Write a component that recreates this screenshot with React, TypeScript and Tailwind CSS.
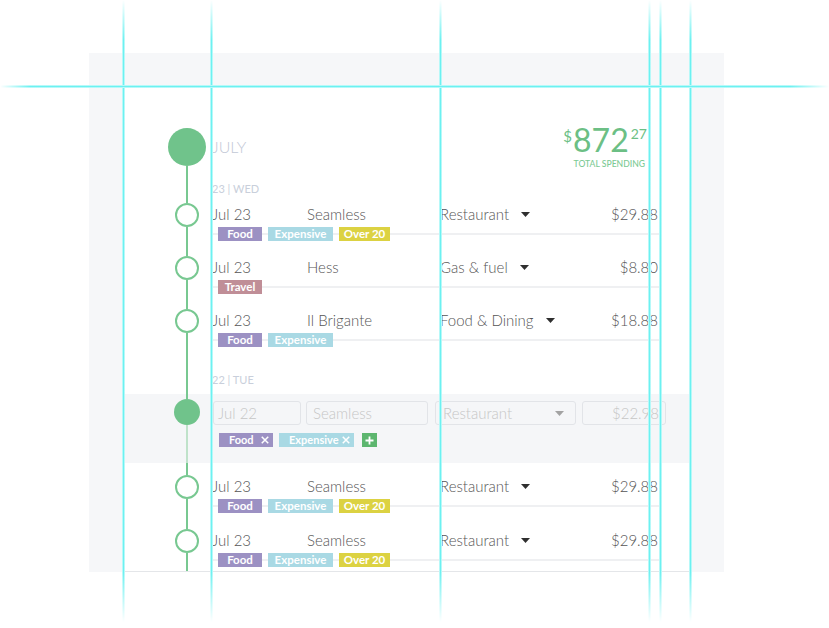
import React from 'react';

type Entry = {
  date: string;
  name: string;
  category: string;
  amount: string;
  tags: string[];
};

const tagStyles: Record<string, string> = {
  Food: 'w-[44px] bg-[#9c91c3]',
  Expensive: 'w-[65px] bg-[#a9d9e4]',
  'Over 20': 'w-[51px] bg-[#dcd242]',
  Travel: 'w-[44px] bg-[#c08e97]',
};

const wednesday: Entry[] = [
  { date: 'Jul 23', name: 'Seamless', category: 'Restaurant', amount: '$29.88', tags: ['Food', 'Expensive', 'Over 20'] },
  { date: 'Jul 23', name: 'Hess', category: 'Gas & fuel', amount: '$8.80', tags: ['Travel'] },
  { date: 'Jul 23', name: 'Il Brigante', category: 'Food & Dining', amount: '$18.88', tags: ['Food', 'Expensive'] },
];

const tuesday: Entry[] = [
  { date: 'Jul 23', name: 'Seamless', category: 'Restaurant', amount: '$29.88', tags: ['Food', 'Expensive', 'Over 20'] },
  { date: 'Jul 23', name: 'Seamless', category: 'Restaurant', amount: '$29.88', tags: ['Food', 'Expensive', 'Over 20'] },
];

function Line({ className = '' }: { className?: string }) {
  return <div className={`w-[2px] bg-[#78c891] ${className}`} />;
}

function Caret({ className = '' }: { className?: string }) {
  return (
    <svg width="9" height="5" viewBox="0 0 9 5" className={className}>
      <path d="M0 0h9L4.5 5z" fill="currentColor" />
    </svg>
  );
}

function Tag({ label }: { label: string }) {
  return (
    <span
      className={`${tagStyles[label]} h-[14px] text-center text-[11.5px] font-bold leading-[14px] text-white`}
    >
      {label}
    </span>
  );
}

function DayLabel({ text, className = '' }: { text: string; className?: string }) {
  return (
    <div className={`flex ${className}`}>
      <div className="w-[89px] shrink-0 pl-[63px]">
        <Line className="h-full" />
      </div>
      <div className="flex items-center text-[11px] text-[#c9cfdb]">{text}</div>
    </div>
  );
}

function Row({ entry, tall }: { entry: Entry; tall?: boolean }) {
  return (
    <div className={`flex ${tall ? 'h-[54px]' : 'h-[53px]'}`}>
      <div className="w-[89px] shrink-0 pl-[52px]">
        <div className="flex h-full w-[24px] flex-col items-center">
          <Line className="h-px" />
          <div className="h-[24px] w-[24px] shrink-0 rounded-full border-2 border-[#78c891] bg-white" />
          <Line className="flex-1" />
        </div>
      </div>
      <div className="flex-1 pr-[30px]">
        <div className="flex h-[25px] items-center text-[15px] font-light text-[#555]">
          <span className="w-[95px]">{entry.date}</span>
          <span className="w-[133px]">{entry.name}</span>
          <span className="flex flex-1 items-center gap-[12px]">
            {entry.category}
            <Caret className="text-[#2f2f2f]" />
          </span>
          <span className="pr-[2px]">{entry.amount}</span>
        </div>
        <div className="flex h-[14px] gap-[6px] bg-[linear-gradient(#eff0f2,#eff0f2)] bg-[length:100%_2px] bg-center bg-no-repeat pl-[6px]">
          {entry.tags.map((t) => (
            <Tag key={t} label={t} />
          ))}
        </div>
      </div>
    </div>
  );
}

function Cross() {
  return (
    <svg width="8" height="8" viewBox="0 0 8 8" className="shrink-0">
      <path d="M0.75 0.75l6.5 6.5M7.25 0.75l-6.5 6.5" stroke="white" strokeWidth="1.5" />
    </svg>
  );
}

function EditRow() {
  const field = 'h-[24px] rounded-[3px] border border-[#e2e4e8] leading-[22px]';
  return (
    <div className="flex h-[69px] bg-[#f5f6f8]">
      <div className="w-[89px] shrink-0 pl-[52px]">
        <div className="flex h-full w-[24px] flex-col items-center">
          <Line className="h-[5px]" />
          <div className="h-[26px] w-[26px] shrink-0 rounded-full bg-[#70c38b]" />
          <div className="w-[2px] flex-1 bg-[#bfe2ca]" />
        </div>
      </div>
      <div className="flex-1 pt-[7px]">
        <div className="flex text-[15px] font-light text-[#c6c6c6]">
          <div className={`${field} ml-px w-[88px] pl-[4px]`}>Jul 22</div>
          <div className={`${field} ml-[5px] w-[122px] pl-[6px]`}>Seamless</div>
          <div className={`${field} ml-[7px] flex w-[141px] items-center justify-between pl-[7px] pr-[11px]`}>
            Restaurant
            <Caret className="text-[#a3a3a3]" />
          </div>
          <div className={`${field} ml-[6px] w-[84px] pr-[6px] text-right`}>$22.98</div>
        </div>
        <div className="mt-[8px] flex h-[14px] items-center pl-[7px] text-[11px] font-bold text-white">
          <span className="flex h-[14px] w-[54px] items-center justify-between bg-[#9c91c3] pl-[10px] pr-[4px]">
            Food
            <Cross />
          </span>
          <span className="ml-[6px] flex h-[14px] w-[75px] items-center justify-between bg-[#a9d9e4] pl-[10px] pr-[4px]">
            Expensive
            <Cross />
          </span>
          <span className="ml-[8px] flex h-[14px] w-[15px] items-center justify-center bg-[#5db66f]">
            <svg width="9" height="9" viewBox="0 0 9 9">
              <path d="M4.5 0.5v8M0.5 4.5h8" stroke="white" strokeWidth="1.8" />
            </svg>
          </span>
        </div>
      </div>
    </div>
  );
}

export default function App() {
  const vGuide =
    'absolute top-0 h-[628px] w-[3px] bg-[linear-gradient(to_right,#dcfcfc,#6cf1f1,#dcfcfc)] [mask-image:linear-gradient(to_bottom,transparent,#000_40px,#000_572px,transparent_622px)]';

  return (
    <div className="relative h-[628px] w-[829px] overflow-hidden bg-white font-['Lato',sans-serif]">
      <div className="ml-[89px] mt-[53px] h-[519px] w-[635px] bg-[#f6f7f9] px-[34px] pt-[34px]">
        <div className="h-[485px] overflow-hidden border-b border-[#e4e6e9] bg-white">
          {/* month header */}
          <div className="flex h-[89px]">
            <div className="flex w-[89px] shrink-0 flex-col pl-[45px] pt-[41px]">
              <div className="flex h-full w-[38px] flex-col items-center">
                <div className="h-[38px] w-[38px] shrink-0 rounded-full bg-[#70c38b]" />
                <Line className="flex-1" />
              </div>
            </div>
            <div className="pt-[41px]">
              <div className="flex h-[38px] items-center text-[16px] font-light text-[#c2c8d6]">JULY</div>
            </div>
            <div className="ml-auto flex flex-col items-end pr-[43px] pt-[37px] text-[#6cbf85]">
              <div className="flex h-[32px] items-start leading-none">
                <span className="mr-[1px] mt-[5px] text-[15px]">$</span>
                <span className="text-[32px]">872</span>
                <span className="ml-[2px] mt-[3px] text-[14px]">27</span>
              </div>
              <div className="mr-[2px] mt-[4px] text-[8.6px] font-medium leading-none text-[#7cca94]">
                TOTAL SPENDING
              </div>
            </div>
          </div>

          <DayLabel text="23 | WED" className="h-[26px]" />
          {wednesday.map((e, i) => (
            <Row key={i} entry={e} />
          ))}

          <DayLabel text="22 | TUE" className="h-[33px] [&>div:last-child]:pt-[5px]" />
          <EditRow />
          <div className="h-[11px] pl-[63px]">
            <Line className="h-full" />
          </div>
          {tuesday.map((e, i) => (
            <Row key={i} entry={e} tall />
          ))}
        </div>
      </div>

      {/* layout guides */}
      <div className={`${vGuide} left-[122px]`} />
      <div className={`${vGuide} left-[210px]`} />
      <div className={`${vGuide} left-[439px]`} />
      <div className={`${vGuide} left-[648px]`} />
      <div className={`${vGuide} left-[659px]`} />
      <div className={`${vGuide} left-[689px]`} />
      <div className="absolute left-0 top-[85px] h-[3px] w-[829px] bg-[linear-gradient(to_bottom,#dcfcfc,#6cf1f1,#dcfcfc)] [mask-image:linear-gradient(to_right,transparent,#000_30px,#000_790px,transparent)]" />
    </div>
  );
}
